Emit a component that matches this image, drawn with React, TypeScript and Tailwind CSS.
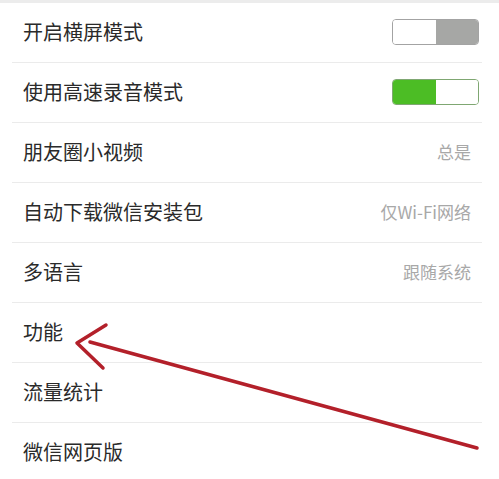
import type { ReactNode } from "react";

type Fila = {
  titulo: string;
  direita?: ReactNode;
};

function Alternador({ ligado }: { ligado: boolean }) {
  if (ligado) {
    return (
      <div className="mr-[3px] flex h-[26px] w-[87px] overflow-hidden rounded-[4px] border border-[#7fa772]">
        <div className="w-1/2 bg-[#4cbd25]" />
        <div className="w-1/2 bg-white" />
      </div>
    );
  }
  return (
    <div className="mr-[3px] flex h-[26px] w-[87px] overflow-hidden rounded-[4px] border border-[#a3a3a3]">
      <div className="w-1/2 bg-white" />
      <div className="w-1/2 bg-[#a6a7a5]" />
    </div>
  );
}

function Valor({ texto }: { texto: string }) {
  return <span className="mr-[11px] text-[17px] text-[#a8a8a8]">{texto}</span>;
}

const filas: Fila[] = [
  { titulo: "开启横屏模式", direita: <Alternador ligado={false} /> },
  { titulo: "使用高速录音模式", direita: <Alternador ligado /> },
  { titulo: "朋友圈小视频", direita: <Valor texto="总是" /> },
  { titulo: "自动下载微信安装包", direita: <Valor texto="仅Wi-Fi网络" /> },
  { titulo: "多语言", direita: <Valor texto="跟随系统" /> },
  { titulo: "功能" },
  { titulo: "流量统计" },
  { titulo: "微信网页版" },
];

export default function App() {
  return (
    <div
      className="relative h-[479px] w-[499px] overflow-hidden bg-white"
      style={{ fontFamily: '"Noto Sans CJK SC", "Noto Sans", sans-serif' }}
    >
      <div className="h-[3px] bg-[#ececec]" />

      {/* Lista de opções */}
      <ul className="flex flex-col">
        {filas.map((fila) => (
          <li
            key={fila.titulo}
            className="ml-[12px] mr-[17px] flex h-[60px] items-center justify-between border-b border-[#ebebeb] pl-[11px] pb-[1px]"
          >
            <span className="text-[20px] text-[#2a2a2a]">{fila.titulo}</span>
            {fila.direita}
          </li>
        ))}
      </ul>

      {/* Seta vermelha desenhada por cima */}
      <svg
        className="pointer-events-none absolute left-0 top-0"
        width="499"
        height="479"
        viewBox="0 0 499 479"
      >
        <g stroke="#b3202a" strokeWidth="3.5" strokeLinecap="round" fill="none">
          <path d="M90 342 L477 448" />
          <path d="M106 325 L77 343 L103 368" strokeLinejoin="round" />
        </g>
      </svg>
    </div>
  );
}
